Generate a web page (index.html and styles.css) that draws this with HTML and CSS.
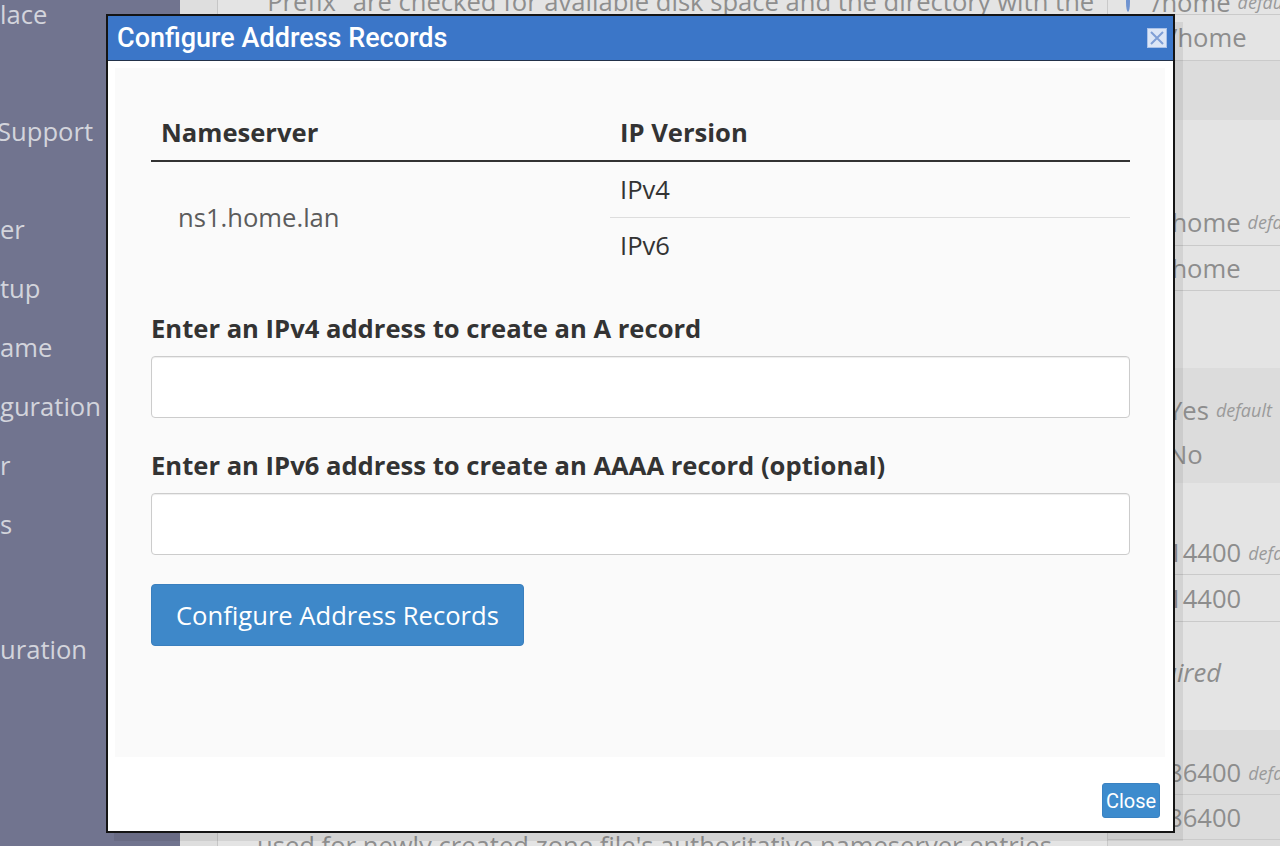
FILE: index.html
```html
<!DOCTYPE html>
<html lang="en">
<head>
    <meta charset="UTF-8">
    <meta name="viewport" content="width=device-width, initial-scale=1.0">
    <title>Configure Address Records</title>
    <link rel="stylesheet" href="styles.css">
</head>
<body>
    <div class="page">
        <nav class="sidebar">
            <ul class="nav nav-top"><li>lace</li></ul>
            <ul class="nav nav-support"><li>Support</li></ul>
            <ul class="nav nav-server">
                <li>er</li>
                <li>tup</li>
                <li>ame</li>
                <li>guration</li>
                <li>r</li>
                <li>s</li>
            </ul>
            <ul class="nav nav-last"><li>uration</li></ul>
        </nav>
        <div class="gutter"></div>
        <main class="main">
            <p class="desc desc-top">"Prefix" are checked for available disk space and the directory with the</p>
            <p class="desc desc-bottom">used for newly created zone file's authoritative nameserver entries.</p>
        </main>
        <aside class="options">
            <div class="opt-group light first">
                <div class="opt-row h25"><span class="radio"></span>/home <em class="default">default</em></div>
                <div class="opt-row h46">/home</div>
            </div>
            <div class="opt-group dark g2"></div>
            <div class="opt-group light g3">
                <div class="opt-row tight h47">/home <em class="default">default</em></div>
                <div class="opt-row tight h45">/home</div>
            </div>
            <div class="opt-group dark g4">
                <div class="opt-row plain h44">Yes <em class="default">default</em></div>
                <div class="opt-row plain h44">No</div>
            </div>
            <div class="opt-group light g5">
                <div class="opt-row h44">14400 <em class="default">default</em></div>
                <div class="opt-row h47">14400</div>
                <div class="opt-row plain h100 required">Required</div>
            </div>
            <div class="opt-group dark g6">
                <div class="opt-row h44">86400 <em class="default">default</em></div>
                <div class="opt-row h45">86400</div>
            </div>
        </aside>
    </div>

    <div class="modal">
        <div class="modal-title">
            <span>Configure Address Records</span>
            <button class="title-close" aria-label="close">
                <svg width="20" height="20" viewBox="0 0 20 20">
                    <rect x="0.5" y="0.5" width="19" height="19" fill="#dce6f6" stroke="#a9c1e8"/>
                    <path d="M4 4 L16 16 M16 4 L4 16" stroke="#7f9fd6" stroke-width="2"/>
                </svg>
            </button>
        </div>
        <div class="modal-body">
            <div class="panel">
                <table class="ns-table">
                    <thead>
                        <tr>
                            <th class="col-ns">Nameserver</th>
                            <th class="col-ip">IP Version</th>
                            <th class="col-status"></th>
                        </tr>
                    </thead>
                    <tbody>
                        <tr class="first-row">
                            <td rowspan="2" class="ns-name">ns1.home.lan</td>
                            <td>IPv4</td>
                            <td></td>
                        </tr>
                        <tr>
                            <td>IPv6</td>
                            <td></td>
                        </tr>
                    </tbody>
                </table>

                <label class="field-label first-label" for="ipv4">Enter an IPv4 address to create an A record</label>
                <input class="field" id="ipv4" type="text">

                <label class="field-label" for="ipv6">Enter an IPv6 address to create an AAAA record (optional)</label>
                <input class="field" id="ipv6" type="text">

                <button class="primary-btn">Configure Address Records</button>
            </div>
            <div class="modal-footer">
                <button class="close-btn">Close</button>
            </div>
        </div>
    </div>
</body>
</html>
```

FILE: styles.css
```css
* {
  box-sizing: border-box;
}

body {
  font-family: "Open Sans", sans-serif;
  margin: 0;
  padding: 0;
  background-color: #e4e4e4;
  overflow: hidden;
}

.page {
  display: flex;
  height: 846px;
  overflow: hidden;
}

/* left navigation (dimmed behind the dialog) */
.sidebar {
  width: 180px;
  flex-shrink: 0;
  background-color: #71748f;
  overflow: hidden;
}

.nav {
  list-style: none;
  margin: 0;
  padding: 0;
}

.nav li {
  height: 59px;
  line-height: 59px;
  font-size: 25.6px;
  color: #d3d4dc;
  white-space: nowrap;
}

.nav-top {
  margin-top: -15px;
}

.nav-support {
  margin-top: 58px;
  margin-left: -3px;
}

.nav-server {
  margin-top: 39px;
}

.nav-last {
  margin-top: 66px;
}

.gutter {
  width: 38px;
  flex-shrink: 0;
  background-color: #dedede;
  border-right: 1px solid #c6c6c6;
}

.main {
  flex: 1;
  display: flex;
  flex-direction: column;
  justify-content: space-between;
  padding-left: 39px;
  background-color: #e4e4e4;
}

.desc {
  margin: 0;
  font-size: 25.6px;
  line-height: 34px;
  color: #8e8e8e;
  white-space: nowrap;
}

.desc-top {
  margin-top: -15px;
}

.desc-bottom {
  margin-bottom: -17px;
}

/* right column with options */
.options {
  width: 173px;
  flex-shrink: 0;
  border-left: 1px solid #c9c9c9;
}

.opt-group.light {
  background-color: #e4e4e4;
}

.opt-group.dark {
  background-color: #dcdcdc;
}

.opt-group.first {
  margin-top: -10px;
}

.g2 { height: 59px; }
.g3 { padding: 79px 0 77px; }
.g4 { padding: 20px 0 7px; }
.g5 { padding: 48px 0 8px; }
.g6 { padding: 21px 0 20px; }

.opt-row {
  display: flex;
  align-items: center;
  padding-left: 60px;
  border-bottom: 1px solid #cacaca;
  font-size: 25.6px;
  color: #8d8d8d;
  white-space: nowrap;
}

.opt-row.tight {
  padding-left: 54px;
}

.opt-row.plain {
  border-bottom: none;
}

.h25 { height: 25px; }
.h44 { height: 44px; }
.h45 { height: 45px; }
.h46 { height: 46px; }
.h47 { height: 47px; }
.h100 { height: 100px; }

.default {
  font-size: 18px;
  color: #9a9a9a;
  margin-left: 7px;
}

.required {
  font-style: italic;
  padding-left: 12px;
}

.radio {
  width: 20px;
  height: 20px;
  border-radius: 50%;
  border: 2px solid #6f93d0;
  background-color: #e9eef8;
  margin-left: -42px;
  margin-right: 22px;
}

/* dialog */
.modal {
  position: absolute;
  left: 106px;
  top: 14px;
  width: 1069px;
  height: 819px;
  display: flex;
  flex-direction: column;
  border: 2px solid #141414;
  background-color: #fff;
  box-shadow: 8px 8px 0 rgba(0, 0, 0, 0.07);
}

.modal-title {
  height: 45px;
  flex-shrink: 0;
  display: flex;
  align-items: center;
  justify-content: space-between;
  padding: 0 6px 1px 9px;
  background-color: #3b76c8;
  border-bottom: 1px solid #23324a;
  font-family: Roboto, "Liberation Sans", sans-serif;
  font-weight: 500;
  font-size: 27px;
  color: #fff;
}

.title-close {
  width: 20px;
  height: 20px;
  padding: 0;
  border: none;
  background: none;
  display: flex;
}

.modal-body {
  flex: 1;
  display: flex;
  flex-direction: column;
  padding: 7px 8px 0 7px;
}

.panel {
  flex: 1;
  display: flex;
  flex-direction: column;
  align-items: flex-start;
  padding: 36px 35px 0 36px;
  background-color: #fafafa;
}

.ns-table {
  width: 100%;
  border-collapse: collapse;
  color: #333;
}

.ns-table th {
  height: 57px;
  padding: 0 10px;
  text-align: left;
  font-size: 25.6px;
  font-weight: 700;
  border-bottom: 2px solid #333;
}

.col-ns {
  width: 459px;
}

.col-status {
  width: 130px;
}

.ns-table td {
  height: 56px;
  padding: 0 10px;
  font-size: 25.6px;
}

.first-row td {
  border-bottom: 1px solid #dddddd;
}

.first-row td.ns-name {
  border-bottom: none;
  padding-left: 27px;
  color: #5c5c5c;
}

.field-label {
  display: block;
  font-size: 25.6px;
  line-height: 30px;
  font-weight: 700;
  color: #333;
  margin-top: 33px;
  white-space: nowrap;
}

.first-label {
  margin-top: 41px;
}

.field {
  display: block;
  width: 100%;
  height: 62px;
  margin-top: 12px;
  border: 1px solid #cccccc;
  border-radius: 4px;
  background-color: #fff;
  box-shadow: inset 0 1px 1px rgba(0, 0, 0, 0.075);
}

.primary-btn {
  height: 62px;
  margin-top: 29px;
  padding: 0 24px;
  border: 1px solid #3a7fbe;
  border-radius: 4px;
  background-color: #3e88c9;
  font-family: "Open Sans", sans-serif;
  font-size: 25.6px;
  color: #fff;
  cursor: pointer;
}

.modal-footer {
  height: 74px;
  flex-shrink: 0;
  display: flex;
  justify-content: flex-end;
  align-items: flex-start;
  padding: 26px 5px 0 0;
}

.close-btn {
  width: 58px;
  height: 35px;
  padding: 0;
  border: 1px solid #3a82c2;
  border-radius: 3px;
  background-color: #3d8bcd;
  font-family: Roboto, "Liberation Sans", sans-serif;
  font-size: 20px;
  color: #fff;
  cursor: pointer;
}
```
